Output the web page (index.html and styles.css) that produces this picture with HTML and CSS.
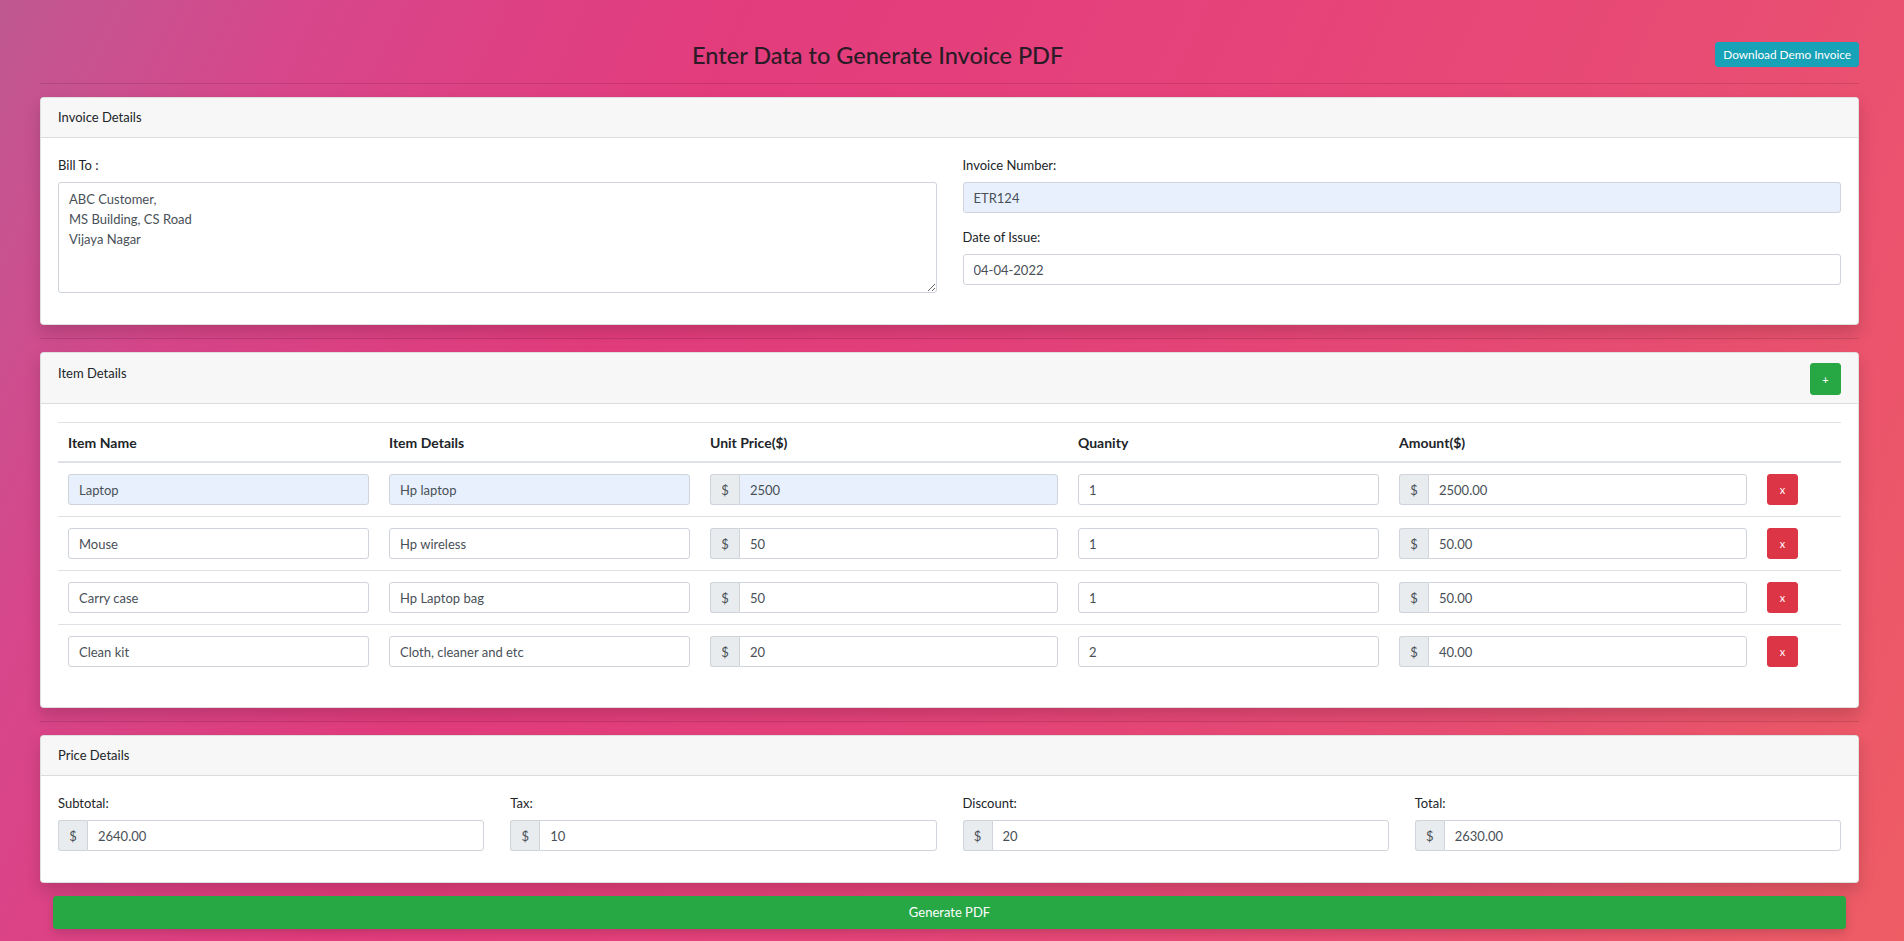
FILE: index.html
```html
<!DOCTYPE html>
<html lang="en">
<head>
<meta charset="utf-8">
<title>Invoice Generator</title>
<link rel="stylesheet" href="styles.css">
</head>
<body>
<div class="page">
  <div class="topbar">
    <h1 class="title">Enter Data to Generate Invoice PDF</h1>
    <button class="btn btn-info">Download Demo Invoice</button>
  </div>
  <hr class="sep">

  <section class="card">
    <div class="card-header">Invoice Details</div>
    <div class="card-body two-col">
      <div class="col">
        <div class="field">
          <label class="label">Bill To :</label>
          <textarea class="control area">ABC Customer,
MS Building, CS Road
Vijaya Nagar</textarea>
        </div>
      </div>
      <div class="col">
        <div class="field">
          <label class="label">Invoice Number:</label>
          <input class="control filled" value="ETR124">
        </div>
        <div class="field">
          <label class="label">Date of Issue:</label>
          <input class="control" value="04-04-2022">
        </div>
      </div>
    </div>
  </section>
  <hr class="sep">

  <section class="card">
    <div class="card-header header-split">
      <span>Item Details</span>
      <button class="btn btn-success btn-icon">+</button>
    </div>
    <div class="card-body items-body">
      <table class="items">
        <colgroup>
          <col class="c-name"><col class="c-name"><col class="c-money"><col class="c-name"><col class="c-money"><col>
        </colgroup>
        <thead>
          <tr><th>Item Name</th><th>Item Details</th><th>Unit Price($)</th><th>Quanity</th><th>Amount($)</th><th></th></tr>
        </thead>
        <tbody>
          <tr>
            <td><input class="control filled" value="Laptop"></td>
            <td><input class="control filled" value="Hp laptop"></td>
            <td><div class="group"><span class="addon">$</span><input class="control filled" value="2500"></div></td>
            <td><input class="control" value="1"></td>
            <td><div class="group"><span class="addon">$</span><input class="control" value="2500.00"></div></td>
            <td><button class="btn btn-danger btn-icon">x</button></td>
          </tr>
          <tr>
            <td><input class="control" value="Mouse"></td>
            <td><input class="control" value="Hp wireless"></td>
            <td><div class="group"><span class="addon">$</span><input class="control" value="50"></div></td>
            <td><input class="control" value="1"></td>
            <td><div class="group"><span class="addon">$</span><input class="control" value="50.00"></div></td>
            <td><button class="btn btn-danger btn-icon">x</button></td>
          </tr>
          <tr>
            <td><input class="control" value="Carry case"></td>
            <td><input class="control" value="Hp Laptop bag"></td>
            <td><div class="group"><span class="addon">$</span><input class="control" value="50"></div></td>
            <td><input class="control" value="1"></td>
            <td><div class="group"><span class="addon">$</span><input class="control" value="50.00"></div></td>
            <td><button class="btn btn-danger btn-icon">x</button></td>
          </tr>
          <tr>
            <td><input class="control" value="Clean kit"></td>
            <td><input class="control" value="Cloth, cleaner and etc"></td>
            <td><div class="group"><span class="addon">$</span><input class="control" value="20"></div></td>
            <td><input class="control" value="2"></td>
            <td><div class="group"><span class="addon">$</span><input class="control" value="40.00"></div></td>
            <td><button class="btn btn-danger btn-icon">x</button></td>
          </tr>
        </tbody>
      </table>
    </div>
  </section>
  <hr class="sep">

  <section class="card">
    <div class="card-header">Price Details</div>
    <div class="card-body four-col">
      <div class="field">
        <label class="label">Subtotal:</label>
        <div class="group"><span class="addon">$</span><input class="control" value="2640.00"></div>
      </div>
      <div class="field">
        <label class="label">Tax:</label>
        <div class="group"><span class="addon">$</span><input class="control" value="10"></div>
      </div>
      <div class="field">
        <label class="label">Discount:</label>
        <div class="group"><span class="addon">$</span><input class="control" value="20"></div>
      </div>
      <div class="field">
        <label class="label">Total:</label>
        <div class="group"><span class="addon">$</span><input class="control" value="2630.00"></div>
      </div>
    </div>
  </section>

  <div class="actions">
    <button class="btn btn-success btn-block">Generate PDF</button>
  </div>
</div>
</body>
</html>
```

FILE: styles.css
```css
* { box-sizing: border-box; }

html, body {
  margin: 0;
  height: 941px;
  overflow: hidden;
}

body {
  font-family: Lato, "Open Sans", "Liberation Sans", sans-serif;
  font-size: 13px;
  color: #212529;
  background: linear-gradient(115deg, #bf5892 0%, #d8468a 14%, #e33c7d 32%, #e6437a 55%, #e94e72 78%, #ee5d64 100%);
}

.page {
  padding: 42px 45px 0 40px;
}

.topbar {
  display: flex;
  align-items: center;
  height: 25px;
}

.title {
  flex: 1;
  margin: 0;
  text-align: center;
  font-size: 23.5px;
  font-weight: 500;
  line-height: 25px;
  color: #2b1b26;
  padding-top: 2px;
}

.sep {
  border: 0;
  border-top: 1px solid rgba(0, 0, 0, 0.12);
  margin: 16px 0 13px;
  height: 0;
}

.card + .sep {
  margin-top: 13px;
}

.card {
  background: #fff;
  border: 1px solid rgba(0, 0, 0, 0.125);
  border-radius: 4px;
  box-shadow: 0 8px 16px rgba(0, 0, 0, 0.16);
}

.card-header {
  background: #f7f7f7;
  border-bottom: 1px solid #dcdcdc;
  padding: 9px 17px 10px;
  line-height: 20px;
  border-radius: 4px 4px 0 0;
  color: #212529;
}

.header-split {
  display: flex;
  justify-content: space-between;
  align-items: flex-start;
  padding-top: 10px;
  padding-bottom: 8px;
}

.card-body {
  padding: 17px 17px;
}

.two-col {
  display: grid;
  grid-template-columns: 1fr 1fr;
  column-gap: 26px;
}

.four-col {
  display: grid;
  grid-template-columns: repeat(4, 1fr);
  column-gap: 26px;
}

.field {
  display: flex;
  flex-direction: column;
  margin-bottom: 14px;
}

.label {
  line-height: 20px;
  margin-bottom: 7px;
  color: #212529;
}

.control {
  font-family: inherit;
  font-size: 13px;
  color: #495057;
  height: 31px;
  width: 100%;
  padding: 0 10px;
  border: 1px solid #ced4da;
  border-radius: 3px;
  background: #fff;
  outline: none;
}

.control.filled {
  background: #e8f0fe;
}

.area {
  height: 111px;
  padding: 6px 10px;
  line-height: 20px;
  resize: vertical;
}

.group {
  display: flex;
  width: 100%;
}

.addon {
  flex: 0 0 29px;
  display: flex;
  align-items: center;
  justify-content: center;
  background: #e9ecef;
  border: 1px solid #ced4da;
  border-right: 0;
  border-radius: 3px 0 0 3px;
  color: #495057;
  height: 31px;
}

.group .control {
  border-radius: 0 3px 3px 0;
  flex: 1;
  min-width: 0;
}

.btn {
  font-family: inherit;
  border: 1px solid transparent;
  border-radius: 3px;
  color: #fff;
  cursor: pointer;
  font-size: 13px;
  line-height: 1;
}

.btn-info {
  background: #17a2b8;
  border-color: #17a2b8;
  height: 25px;
  padding: 0 7px;
  font-size: 11.8px;
}

.btn-success {
  background: #28a745;
  border-color: #28a745;
}

.btn-danger {
  background: #dc3545;
  border-color: #dc3545;
}

.btn-icon {
  width: 31px;
  height: 31px;
  padding: 0;
  font-size: 11px;
}

.header-split .btn-icon {
  height: 32px;
}

.items-body {
  padding-top: 18px;
  padding-bottom: 17px;
}

.items {
  width: 100%;
  border-collapse: collapse;
  table-layout: fixed;
  margin-bottom: 12px;
}

.c-name { width: 321px; }
.c-money { width: 368px; }

.items th {
  text-align: left;
  font-weight: 700;
  font-size: 14px;
  line-height: 20px;
  padding: 10px 10px 8px;
  border-top: 1px solid #dee2e6;
  border-bottom: 2px solid #dee2e6;
  color: #212529;
}

.items td {
  padding: 11px 10px;
  border-top: 1px solid #dee2e6;
  vertical-align: top;
}

.items tbody tr:first-child td {
  border-top: 0;
}

.actions {
  padding: 13px 13px 0;
}

.btn-block {
  width: 100%;
  height: 33px;
  box-shadow: 0 4px 10px rgba(0, 0, 0, 0.15);
}
```
